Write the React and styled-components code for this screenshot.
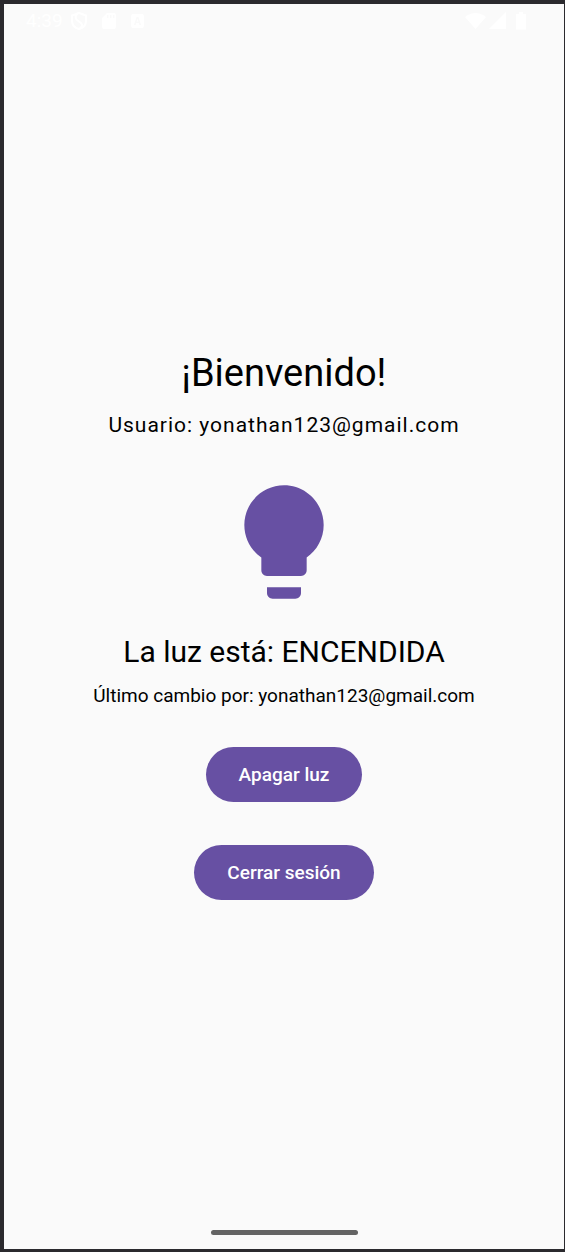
import React, { useState } from "react";
import styled, { createGlobalStyle } from "styled-components";

const GlobalStyle = createGlobalStyle`
  *, *::before, *::after { box-sizing: border-box; }
  body { margin: 0; background: #2b2a2e; font-family: Roboto, "Liberation Sans", sans-serif; }
`;

const Screen = styled.div`
  display: flex;
  flex-direction: column;
  min-height: 100vh;
  border: solid #2b2a2e;
  border-width: 4px 1px 3px 4px;
  background: #fafafa;
  color: #000;
`;

const StatusBar = styled.header`
  display: flex;
  align-items: center;
  justify-content: space-between;
  height: 33px;
  padding: 0 34px 0 22px;
  color: #fff;
`;

const StatusGroup = styled.div`
  display: flex;
  align-items: center;
  gap: ${({ $gap }) => $gap}px;
`;

const Clock = styled.time`
  font-size: 19px;
  line-height: 22px;
`;

const StatusIcon = styled.svg`
  display: block;
  width: ${({ $width }) => $width}px;
  height: 18px;
  fill: currentColor;
`;

const Content = styled.main`
  flex: 1;
  display: flex;
  flex-direction: column;
  align-items: center;
  justify-content: center;
  padding-top: 2px;
  text-align: center;
`;

const Title = styled.h1`
  margin: 0 0 11px;
  font-size: 38px;
  font-weight: 400;
  line-height: 49px;
`;

const UserLine = styled.p`
  margin: 0;
  font-size: 21px;
  line-height: 33px;
  letter-spacing: 1px;
`;

const Bulb = styled.svg`
  display: block;
  width: 136px;
  height: 136px;
  margin: 32px 0 23px;
  fill: ${({ $on }) => ($on ? "#6750a3" : "#9e9e9e")};
`;

const LightStatus = styled.h2`
  margin: 0 0 11px;
  font-size: 30px;
  font-weight: 400;
  line-height: 38px;
`;

const LastChange = styled.p`
  margin: 0 0 32px;
  font-size: 19px;
  line-height: 27px;
`;

const Actions = styled.div`
  display: flex;
  flex-direction: column;
  align-items: center;
  gap: 43px;
  padding: 6px 0;
`;

const Button = styled.button`
  height: 55px;
  padding: 0 33px;
  border: 0;
  border-radius: 28px;
  background: #6750a3;
  color: #fff;
  font: 500 19px/27px Roboto, "Liberation Sans", sans-serif;
  cursor: pointer;
`;

const NavigationBar = styled.footer`
  display: flex;
  align-items: center;
  justify-content: center;
  height: 33px;
`;

const HomeHandle = styled.div`
  width: 147px;
  height: 5px;
  border-radius: 3px;
  background: #646464;
`;

export default function App() {
  const [on, setOn] = useState(true);

  return (
    <>
      <GlobalStyle />
      <Screen>
        <StatusBar>
          <StatusGroup $gap={8}>
            <Clock>4:39</Clock>
            <StatusGroup $gap={15}>
              <StatusIcon $width={16} viewBox="0 0 16 18" aria-hidden="true">
                <path d="M8 1 15 3.500V9c0 4-3 7-7 8-4-1-7-4-7-8V3.500Z" fill="none" stroke="currentColor" strokeWidth="2" />
                <path d="M7 1C4 4 4 6 6 8l4 3c2 2 1 4-2 6" fill="none" stroke="currentColor" strokeWidth="2" />
              </StatusIcon>
              <StatusIcon $width={14} viewBox="0 0 14 18" aria-hidden="true">
                <path fillRule="evenodd" d="M5 1h7q2 0 2 2v12q0 2-2 2H2q-2 0-2-2V6ZM5 3v3h1.500V3Zm3 0v3h1.500V3Zm3 0v3h1.500V3Z" />
              </StatusIcon>
              <StatusIcon $width={13} viewBox="0 0 13 18" aria-hidden="true">
                <path fillRule="evenodd" d="M2 2h9q2 0 2 2v10q0 2-2 2H2q-2 0-2-2V4q0-2 2-2Zm3.500 3L3 13h1.500l.7-2h2.600l.7 2H10L7.500 5Zm1 1.500 1 3h-2Z" />
              </StatusIcon>
            </StatusGroup>
          </StatusGroup>
          <StatusGroup $gap={3}>
            <StatusIcon $width={21} viewBox="0 0 21 18" aria-hidden="true">
              <path d="M0 5Q10.500-3 21 5L10.500 17Z" />
            </StatusIcon>
            <StatusIcon $width={17} viewBox="0 0 17 18" aria-hidden="true">
              <path d="M0 17 17 0v17Z" />
            </StatusIcon>
            <StatusIcon $width={21} viewBox="0 0 21 18" aria-hidden="true">
              <path d="M10 0h4v2h3v15.500H7V2h3Z" />
            </StatusIcon>
          </StatusGroup>
        </StatusBar>

        <Content>
          <Title>¡Bienvenido!</Title>
          <UserLine>Usuario: yonathan123@gmail.com</UserLine>
          <Bulb $on={on} viewBox="0 0 24 24" aria-hidden="true">
            <path d="M9 21c0 .55.45 1 1 1h4c.55 0 1-.45 1-1v-1H9v1zm3-19C8.140 2 5 5.140 5 9c0 2.380 1.190 4.470 3 5.740V17c0 .55.45 1 1 1h6c.55 0 1-.45 1-1v-2.260c1.810-1.270 3-3.360 3-5.740 0-3.860-3.140-7-7-7z" />
          </Bulb>
          <LightStatus>La luz está: {on ? "ENCENDIDA" : "APAGADA"}</LightStatus>
          <LastChange>Último cambio por: yonathan123@gmail.com</LastChange>
          <Actions>
            <Button type="button" onClick={() => setOn(!on)}>
              {on ? "Apagar luz" : "Encender luz"}
            </Button>
            <Button type="button">Cerrar sesión</Button>
          </Actions>
        </Content>

        <NavigationBar>
          <HomeHandle />
        </NavigationBar>
      </Screen>
    </>
  );
}
